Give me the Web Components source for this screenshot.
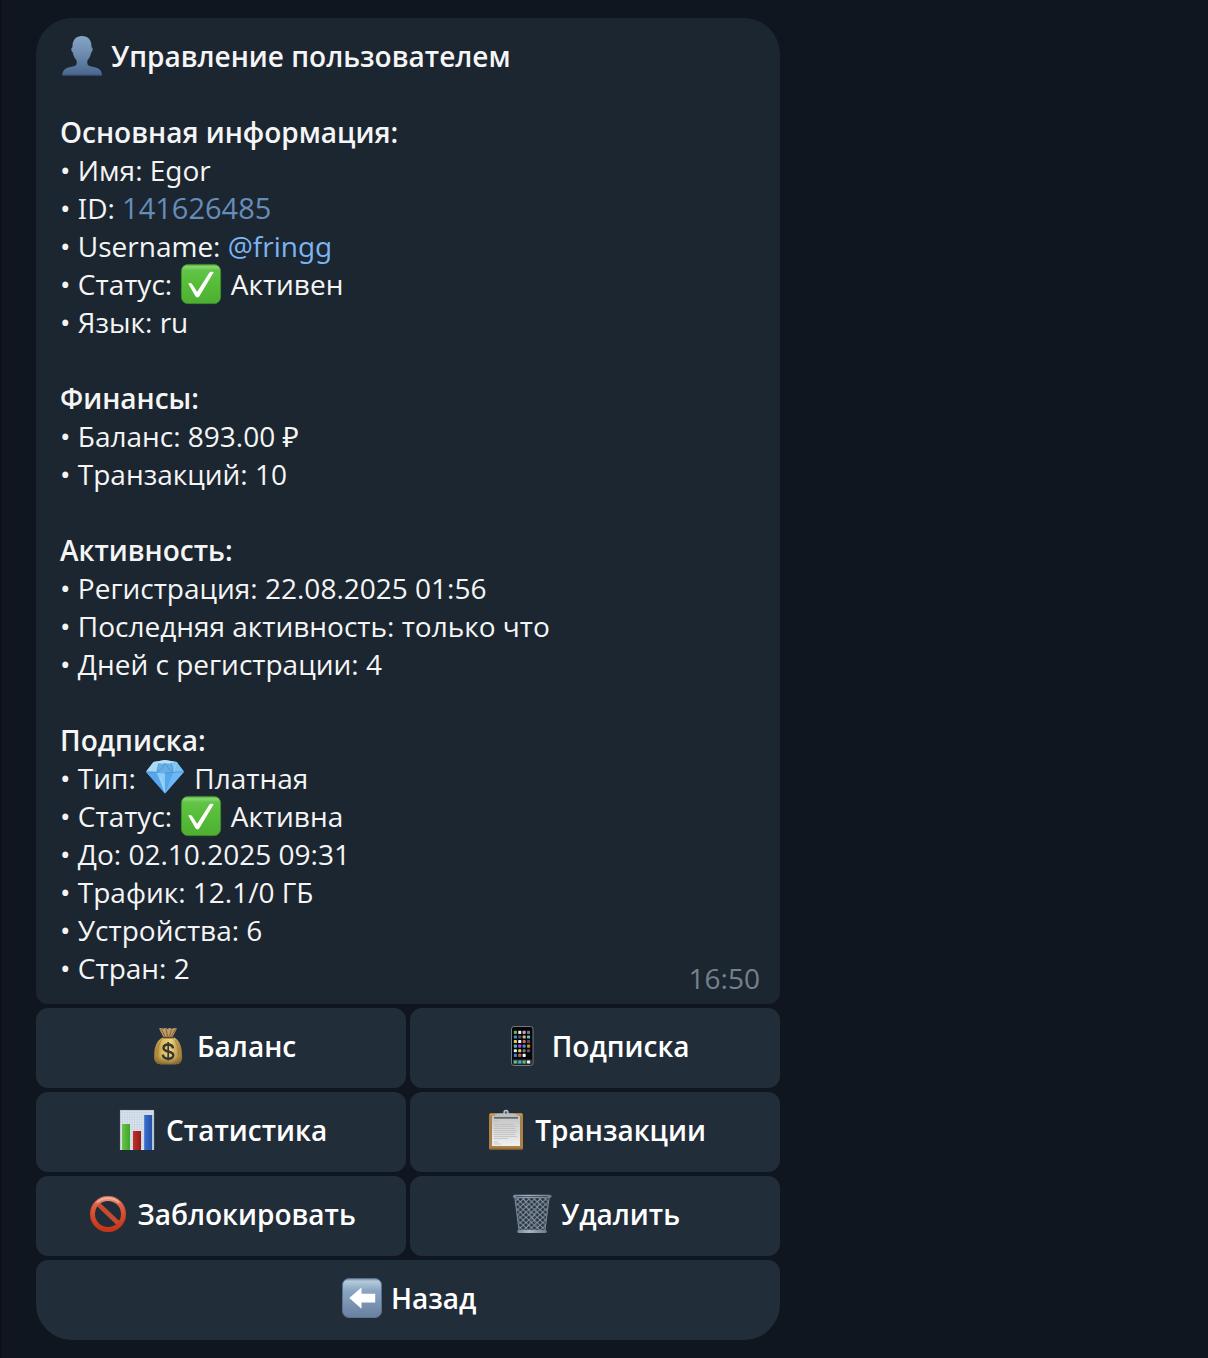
<!DOCTYPE html>
<html lang="ru">
<head>
<meta charset="utf-8">
<meta name="viewport" content="width=device-width, initial-scale=1">
<title>Управление пользователем</title>
<style>
  html { min-height: 100%; background: #10161f; }
  body {
    margin: 0;
    min-height: 100vh;
    box-sizing: border-box;
    border-left: 2px solid #0b101a;
    border-bottom: 2px solid #0b101a;
    background: #10161f;
    color: #f5f5f5;
    font: 400 28px/38px "Open Sans", "Noto Sans", sans-serif;
    font-feature-settings: "ss01", "salt";
  }
</style>
</head>
<body>
<chat-view>
  <message-bubble time="16:50">
    <info-section><emoji-icon slot="icon" name="person"></emoji-icon><span slot="title">Управление пользователем</span></info-section>
    <info-section>
      <span slot="title">Основная информация:</span>
      <info-row>Имя: Egor</info-row>
      <info-row>ID: <user-id>141626485</user-id></info-row>
      <info-row>Username: <user-link>@fringg</user-link></info-row>
      <info-row>Статус: <emoji-icon name="check"></emoji-icon> Активен</info-row>
      <info-row>Язык: ru</info-row>
    </info-section>
    <info-section>
      <span slot="title">Финансы:</span>
      <info-row>Баланс: 893.00 ₽</info-row>
      <info-row>Транзакций: 10</info-row>
    </info-section>
    <info-section>
      <span slot="title">Активность:</span>
      <info-row>Регистрация: 22.08.2025 01:56</info-row>
      <info-row>Последняя активность: только что</info-row>
      <info-row>Дней с регистрации: 4</info-row>
    </info-section>
    <info-section>
      <span slot="title">Подписка:</span>
      <info-row>Тип: <emoji-icon name="gem"></emoji-icon> Платная</info-row>
      <info-row>Статус: <emoji-icon name="check"></emoji-icon> Активна</info-row>
      <info-row>До: 02.10.2025 09:31</info-row>
      <info-row>Трафик: 12.1/0 ГБ</info-row>
      <info-row>Устройства: 6</info-row>
      <info-row>Стран: 2</info-row>
    </info-section>
  </message-bubble>
  <inline-keyboard>
    <keyboard-button icon="bag">Баланс</keyboard-button>
    <keyboard-button icon="phone">Подписка</keyboard-button>
    <keyboard-button icon="chart">Статистика</keyboard-button>
    <keyboard-button icon="clipboard">Транзакции</keyboard-button>
    <keyboard-button icon="ban">Заблокировать</keyboard-button>
    <keyboard-button icon="trash">Удалить</keyboard-button>
    <keyboard-button icon="back" wide>Назад</keyboard-button>
  </inline-keyboard>
</chat-view>

<script>
const phoneApps = (() => {
  const rows = [
    ['#62b757', '#e8e8e8', '#c59bd0', '#77797c'],
    ['#4292d5', '#56585b', '#d0ba88', '#65bfd0'],
    ['#e1ce68', '#f3f3f3', '#cf6559', '#505256'],
    ['#59b5c8', '#b24bd2', '#4289dd', '#d78a24'],
    ['#f0f0f0', '#e0d267', '#7b7d7f', '#585a5d'],
    ['#3c88d6', '#cb5c52', '#f5f5f5', '#090a0b'],
  ];
  let out = '';
  rows.forEach((r, y) => r.forEach((c, x) => {
    out += `<rect x="${11.8 + x * 4.4}" y="${4.8 + y * 4.6}" width="3.1" height="3.1" rx=".7" fill="${c}"/>`;
  }));
  ['#65c269', '#4ba6df', '#63bd59', '#f2f2f2'].forEach((c, x) => {
    out += `<rect x="${11.8 + x * 4.4}" y="34.4" width="3.1" height="3.1" rx=".7" fill="${c}"/>`;
  });
  return out;
})();

const chartGrid = (() => {
  let d = '';
  for (let x = 5.5; x < 37; x += 2.4) d += `M${x} 1V39`;
  for (let y = 2.5; y < 39; y += 2.4) d += `M4 ${y}H36`;
  return d;
})();

const icons = {
  person: `<defs><linearGradient id="g" x1="0" y1="0" x2="0" y2="1"><stop offset="0" stop-color="#86a6c6"/><stop offset=".55" stop-color="#6785a9"/><stop offset="1" stop-color="#49658d"/></linearGradient></defs>
    <path fill="url(#g)" d="M20 0C26 0 29.500 4 29.500 10v1.200c1.600.3 1.500 3.600-.2 5.100C28.500 20.500 27 22.500 25.300 24.800v2.800c.4 2.400 3 2.900 6.500 3.400 5.200.8 8.200 3.400 8.200 8.500H.3C.3 34.500 3.300 31.800 8.300 31c3.500-.5 6-1 6.400-3.400v-2.800C13 22.500 11.500 20.500 10.700 16.300 9 14.800 8.900 11.500 10.500 11.200V10C10.500 4 14 0 20 0z"/>
    <path stroke="#344b72" stroke-width="1" d="M.4 39.200H39.900"/>`,
  check: `<defs><linearGradient id="g" x1="0" y1="0" x2="0" y2="1"><stop offset="0" stop-color="#4fa936"/><stop offset=".06" stop-color="#8bd674"/><stop offset=".15" stop-color="#62c447"/><stop offset=".5" stop-color="#55bd38"/><stop offset="1" stop-color="#4eae33"/></linearGradient></defs>
    <rect x=".4" y=".4" width="39.200" height="39.200" rx="6.500" fill="url(#g)" stroke="#3d922a" stroke-width=".8"/>
    <path fill="#fff" d="M7.200 19.500c1.600-1 3-.8 4 .7l5 7.500L28 9.200c1.100-1.500 2.600-1.700 4.700-1L18.500 32c-1.200 1.900-3 1.900-4.200.1z"/>`,
  gem: `<defs><linearGradient id="g" x1="0" y1="0" x2=".8" y2="1"><stop offset="0" stop-color="#9bdafb"/><stop offset="1" stop-color="#3089df"/></linearGradient></defs>
    <g transform="translate(0 -.5)"><path fill="url(#g)" d="M8.500 4.500 20 2.500l11.700 2L39 14.200 20 36 1 14.200z"/>
    <path fill="#a9d8f7" d="M8.500 4.500 14 5.500 11.500 14 1 14.200z"/><path fill="#66afe6" d="M14 5.500h12l2.500 9h-17z"/>
    <path fill="#b9e0f8" d="m8.500 4.500 11.500-2 11.700 2L26 6H14z"/><path fill="#7bc0f0" d="m26 5.500 5.700-1L39 14.200l-10.500.3z"/>
    <path fill="#55a6ec" d="m1 14.200 10.500.3L20 36z"/><path fill="#8cccf9" d="M11.500 14.500h8.600L20 36z"/><path fill="#5aa6ec" d="M20.100 14.500h8.400L20 36z"/><path fill="#6cb8f5" d="m28.500 14.500 10.500-.3L20 36z"/>
    <path fill="none" stroke="#4389c4" stroke-width=".6" d="M1 14.200Q20 16.800 39 14.200M14 5.500l-2.500 9 5-3 3.500-6 4 6 4.500 3-2.500-9"/>
    <path fill="none" stroke="#b5def8" stroke-width=".5" d="m8.500 4.500 3 10M31.700 4.500l-3.200 10M4 13l7-6M15 19l5 16"/></g>`,
  bag: `<defs><linearGradient id="g"><stop offset="0" stop-color="#a27c32"/><stop offset=".3" stop-color="#d9bd60"/><stop offset=".6" stop-color="#ead47a"/><stop offset="1" stop-color="#9a7434"/></linearGradient><linearGradient id="s" x1="0" y1="0" x2="0" y2="1"><stop offset=".7" stop-color="#6d4c1b" stop-opacity="0"/><stop offset="1" stop-color="#6d4c1b" stop-opacity=".75"/></linearGradient></defs>
    <path fill="url(#g)" d="M14.500 11.500h12C31 14.200 34 20 34 28c1 7.500-2 10.200-6 10.200H12.500C8 38.200 5.500 35 6.200 29 6 20 9.500 14.200 14.500 11.500z"/>
    <path fill="url(#s)" d="M14.500 11.500h12C31 14.200 34 20 34 28c1 7.500-2 10.200-6 10.200H12.500C8 38.200 5.500 35 6.200 29 6 20 9.500 14.200 14.500 11.500z"/>
    <path fill="#bd9c67" d="M11 2.500q2.500-1.200 4 .2 2-1.600 4.500.2 2.500-1.700 4.500 0 2-1.400 5-.4l-4.500 8.600h-9z"/>
    <path fill="none" stroke="#7b5731" stroke-width=".9" d="m13 3 4 7M18 3l1.500 7M23.500 3.500l-2 6.500M27.500 3l-4 7"/>
    <path fill="none" stroke="#987134" stroke-width=".6" d="M14 13c-3 4-5 10-4 20M27 14c3 5 4 12 3 19"/>
    <path stroke="#66441f" stroke-width="1.800" d="M14.500 11.500h11.500"/>
    <path fill="none" stroke="#383533" stroke-width="2.500" d="M25 22.300c-.6-5-9.500-4.900-9.500-.4 0 4.700 9.800 2.500 9.800 7.400 0 4.700-9.800 4.700-10.500-.7"/>
    <path stroke="#383533" stroke-width="1.700" d="M20.200 16v18.500"/>`,
  phone: `<rect x="9.500" y=".5" width="21.500" height="39" rx="2.500" fill="#050607" stroke="#77797b"/><rect x="10.800" y="33.400" width="19" height="5" rx="1" fill="#34424a"/>${phoneApps}`,
  chart: `<rect x="3" y="0" width="34" height="40" fill="#dfe6ef"/><path stroke="#b8c7d9" stroke-width=".45" d="${chartGrid}"/><path fill="none" stroke="#aeb6bf" stroke-width=".7" d="M3.400 40V.4h33.200V40"/>
    <defs><linearGradient id="g"><stop offset="0" stop-color="#67c54a"/><stop offset="1" stop-color="#42a42a"/></linearGradient><linearGradient id="r"><stop offset="0" stop-color="#bd3428"/><stop offset="1" stop-color="#951b16"/></linearGradient><linearGradient id="b"><stop offset="0" stop-color="#386fd0"/><stop offset="1" stop-color="#2450a5"/></linearGradient></defs>
    <path fill="url(#g)" d="M5 14h8v26H5z"/><path fill="url(#r)" d="M16 21h8v19h-8z"/><path fill="url(#b)" d="M27.200 5h8v35h-8z"/>`,
  clipboard: `<rect x="3" y="3" width="34" height="37" rx="2" fill="#a98149"/><path fill="#c99d60" d="M4 4h32v1.500H4z"/><path fill="#7b5a30" d="M4 38.500h32V40H4z"/>
    <defs><linearGradient id="g" x1="0" y1="0" x2="0" y2="1"><stop offset="0" stop-color="#c3c4c5"/><stop offset="1" stop-color="#f1f1f0"/></linearGradient></defs><path fill="url(#g)" d="M6 6h28v30H6z"/>
    <path stroke="#b3b4b5" stroke-width=".6" d="M8 11h5M8 14.500h20M8 16.500h22M8 18.500h21M8 20.500h23M8 22.500h22M8 24.500h21M8 26.500h23M8 28.500h14M8 32h4M8 34h7"/>
    <path fill="#62676b" d="M8 7h24v1.700H8z"/><path fill="#b9bdc0" d="M8 7c0-3 3-3.500 7.500-3.500h9C29 3.500 32 4 32 7z"/><circle cx="20" cy="2.500" r="2" fill="#555e67" stroke="#b6c7d5" stroke-width="1.300"/>`,
  ban: `<defs><linearGradient id="g" x1="0" y1="0" x2="0" y2="1"><stop offset="0" stop-color="#ec9a85"/><stop offset=".2" stop-color="#dc6246"/><stop offset=".7" stop-color="#cf4326"/><stop offset="1" stop-color="#c93618"/></linearGradient></defs>
    <path stroke="#c94a30" stroke-width="4.500" d="m8.500 8.500 23 22"/><circle cx="20" cy="20" r="15.500" fill="none" stroke="url(#g)" stroke-width="5"/>
    <circle cx="20" cy="20" r="17.800" fill="none" stroke="#a8371f" stroke-width=".5"/><path fill="none" stroke="#f3b7a6" stroke-width="1.200" d="M9 8.500c6-5.700 16-5.700 22 0"/>`,
  trash: `<defs><pattern id="m" width="5.600" height="5.200" patternUnits="userSpaceOnUse"><path fill="none" stroke="#8999aa" stroke-width="1" d="m0 0 5.600 5.200M5.600 0 0 5.200"/></pattern><linearGradient id="g"><stop offset="0" stop-color="#73879f"/><stop offset=".4" stop-color="#a9b4c4"/><stop offset="1" stop-color="#74777f"/></linearGradient></defs>
    <path fill="#29323d" d="M3 3h34l-4.500 34.500h-25z"/><path fill="url(#m)" d="M3 3h34l-4.500 34.500h-25z"/>
    <path fill="none" stroke="#788899" stroke-width="1.100" d="m2.800 3 4.300 34M37.200 3l-4.300 34"/><path fill="none" stroke="#8797a8" stroke-width=".6" d="M12 4q5 17 16 33M28 4q-4 18-16 33"/>
    <rect x="1" y=".7" width="38.500" height="3" rx="1.500" fill="url(#g)"/><path fill="#3c4754" d="M4 2h32v.8H4z"/><rect x="5.300" y="36" width="29.500" height="3" rx="1.500" fill="url(#g)"/>`,
  back: `<defs><linearGradient id="g" x1="0" y1="0" x2="0" y2="1"><stop offset="0" stop-color="#7189a4"/><stop offset=".07" stop-color="#b5cadb"/><stop offset=".3" stop-color="#8ba7c5"/><stop offset="1" stop-color="#697f9f"/></linearGradient></defs>
    <rect x=".5" y=".5" width="39" height="39" rx="6.500" fill="url(#g)" stroke="#587391"/><path fill="#fff" d="M7.300 20 19.500 9.500v6.300h13.700v8.700H19.500v6.300z"/>`,
};

const define = (name, html, setup) => customElements.define(name, class extends HTMLElement {
  constructor() {
    super();
    this.attachShadow({ mode: 'open' }).innerHTML = html;
  }
  connectedCallback() {
    if (setup) setup(this, this.shadowRoot);
  }
});

define('emoji-icon', `<style>
  :host { display: inline-block; width: 40px; height: 38px; margin: 0 2px; vertical-align: top; flex: none; }
  svg { display: block; width: 40px; height: 40px; margin: -1px 0; overflow: visible; }
</style><svg viewBox="0 0 40 40" aria-hidden="true"></svg>`, (el, root) => {
  root.querySelector('svg').innerHTML = icons[el.getAttribute('name')];
});

define('chat-view', `<style>
  :host { display: block; padding: 18px 34px; }
  main { display: flex; flex-direction: column; gap: 4px; max-width: 744px; }
</style><main><slot></slot></main>`);

define('message-bubble', `<style>
  :host { display: block; }
  article { display: flex; align-items: flex-end; padding: 19px 20px 7px 24px; border-radius: 36px 36px 12px 12px; background: #1c2631; }
  .content { flex: 1; min-width: 0; display: flex; flex-direction: column; gap: 38px; padding-bottom: 10px; }
  time { color: #75818d; }
</style><article><div class="content"><slot></slot></div><time></time></article>`, (el, root) => {
  root.querySelector('time').textContent = el.getAttribute('time');
});

define('info-section', `<style>
  :host { display: block; }
  h2 { margin: 0; font: inherit; font-weight: 600; }
</style><section><h2><slot name="icon"></slot> <slot name="title"></slot></h2><slot></slot></section>`);

define('info-row', `<style>
  :host { display: block; }
</style>• <slot></slot>`);

define('user-id', `<style>
  code { font-family: "Open Sans", sans-serif; font-size: 29px; line-height: 1; color: #658db8; }
</style><code><slot></slot></code>`);

define('user-link', `<style>
  a { color: #7bb5f3; text-decoration: none; }
</style><a href="#fringg"><slot></slot></a>`);

define('inline-keyboard', `<style>
  :host { display: grid; grid-template-columns: 1fr 1fr; gap: 4px; }
</style><slot></slot>`);

define('keyboard-button', `<style>
  :host { display: block; }
  :host([wide]) { grid-column: 1 / -1; }
  button { display: block; width: 100%; margin: 0; padding: 19px 12px 23px; border: 0; border-radius: 12px; background: #212d38; color: #fff; font: inherit; font-feature-settings: inherit; font-weight: 600; text-align: center; cursor: pointer; }
  :host([wide]) button { border-radius: 12px 12px 36px 36px; }
</style><button type="button"><emoji-icon></emoji-icon> <slot></slot></button>`, (el, root) => {
  const icon = document.createElement('emoji-icon');
  icon.setAttribute('name', el.getAttribute('icon'));
  root.querySelector('emoji-icon').replaceWith(icon);
});
</script>
</body>
</html>
